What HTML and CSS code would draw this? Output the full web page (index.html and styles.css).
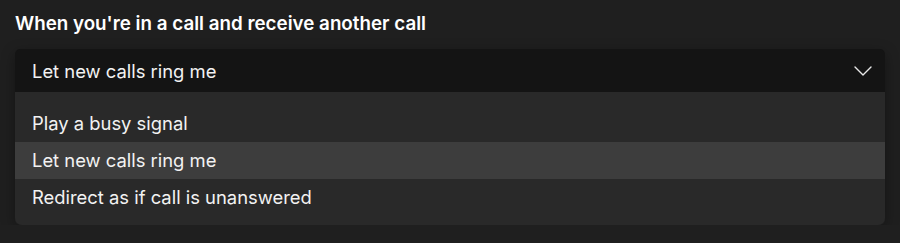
FILE: index.html
```html
<!DOCTYPE html>
<html lang="en">
<head>
    <meta charset="UTF-8">
    <meta name="viewport" content="width=device-width, initial-scale=1.0">
    <title>Call settings</title>
    <link rel="stylesheet" href="styles.css">
</head>
<body>
    <div class="setting">
        <h2 class="setting-title">When you're in a call and receive another call</h2>
        <div class="select">
            <div class="select-value">
                <span>Let new calls ring me</span>
                <svg class="chevron" width="18" height="10" viewBox="0 0 18 10">
                    <path d="M1 1 L9 9 L17 1" fill="none" stroke="#e8e8e8" stroke-width="1.4" stroke-linecap="round" stroke-linejoin="round"/>
                </svg>
            </div>
            <ul class="options">
                <li class="option">Play a busy signal</li>
                <li class="option selected">Let new calls ring me</li>
                <li class="option">Redirect as if call is unanswered</li>
            </ul>
        </div>
    </div>
</body>
</html>
```

FILE: styles.css
```css
body {
    margin: 0;
    background-color: #1f1f1f;
    color: #f2f2f2;
    font-family: 'Inter', 'Noto Sans', sans-serif;
}
.setting {
    padding: 12px 15px 0;
}
.setting-title {
    font-size: 18.8px;
    font-weight: 600;
    margin: 0 0 13px;
    line-height: 24px;
    color: #fff;
}
.select {
    border-radius: 5px;
    box-shadow: 0 4px 14px rgba(0, 0, 0, 0.35);
}
.select-value {
    display: flex;
    align-items: center;
    justify-content: space-between;
    height: 43px;
    padding: 0 13px 0 17px;
    background: #141414;
    border-radius: 5px 5px 0 0;
    font-size: 18.4px;
}
.options {
    list-style: none;
    margin: 0;
    padding: 13px 0 9px;
    background: #292929;
    border-radius: 0 0 7px 7px;
}
.option {
    height: 37px;
    line-height: 37px;
    padding: 0 17px;
    font-size: 18.4px;
}
.option.selected {
    background: #3d3d3d;
}
```
